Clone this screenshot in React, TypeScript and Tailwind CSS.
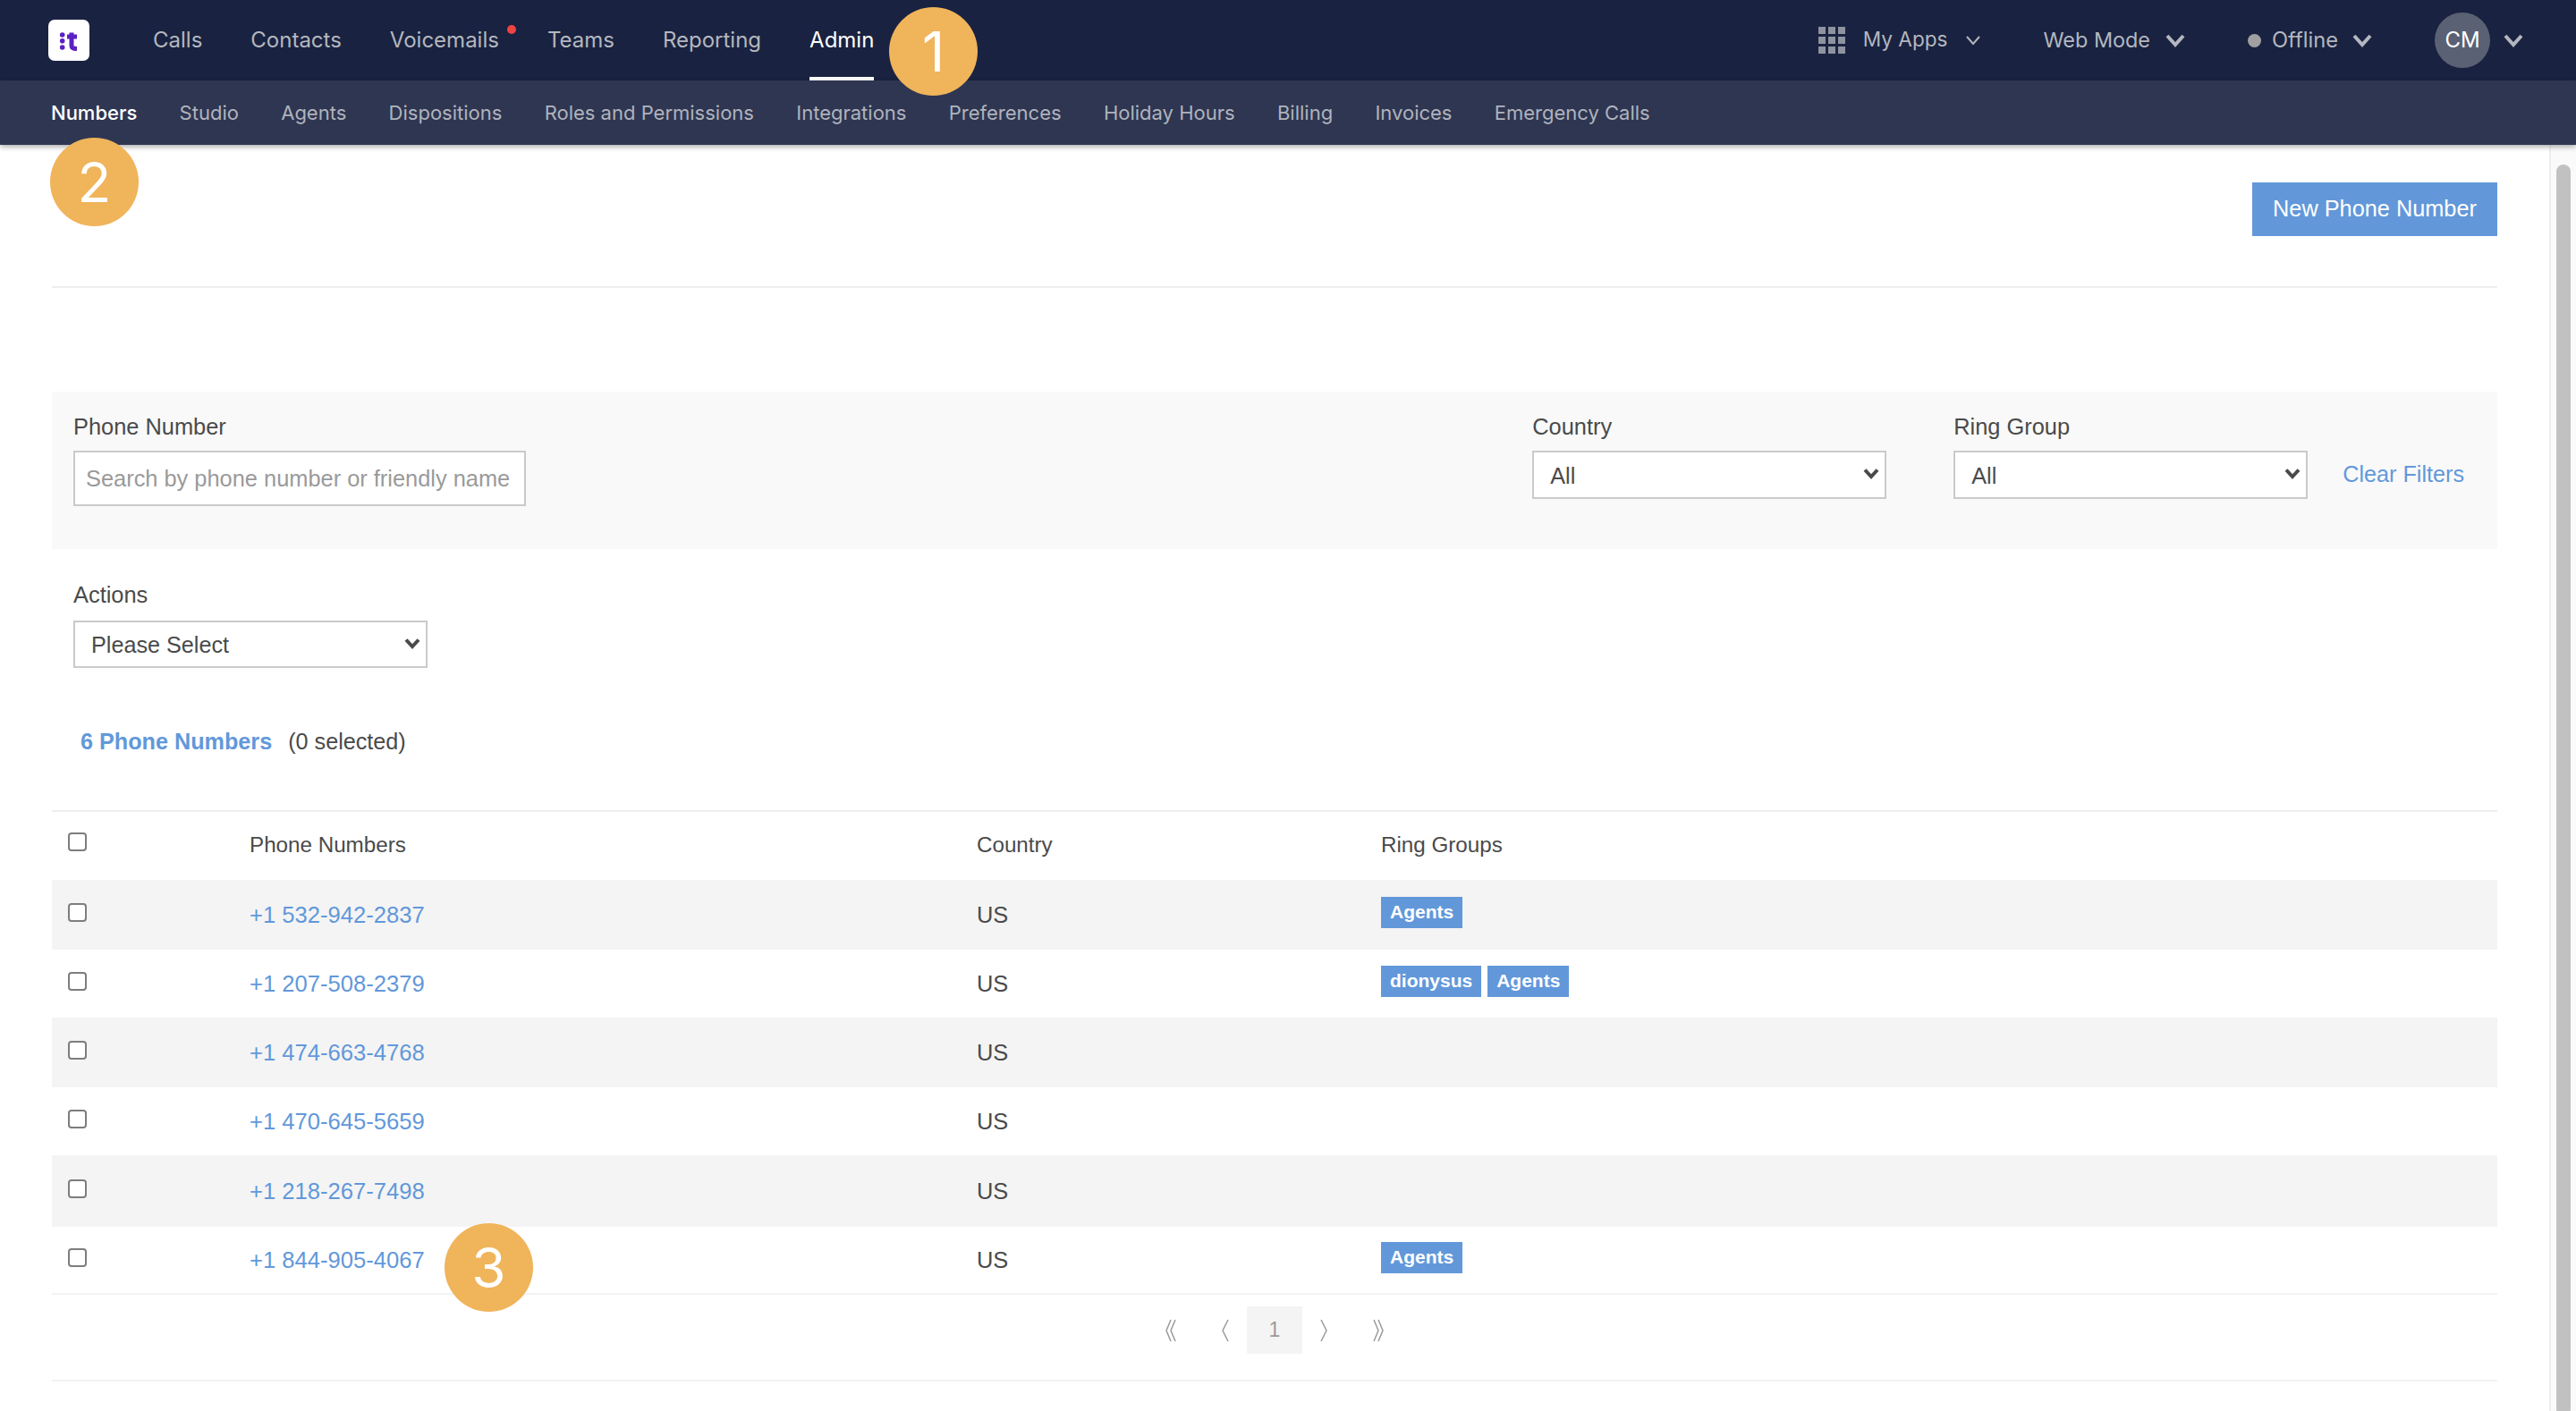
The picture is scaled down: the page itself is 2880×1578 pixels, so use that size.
/**
 * Admin > Numbers page: top nav, filters and phone number table.
 */

const MAIN_NAV = ["Calls", "Contacts", "Voicemails", "Teams", "Reporting", "Admin"];
const SUB_NAV = [
  "Numbers",
  "Studio",
  "Agents",
  "Dispositions",
  "Roles and Permissions",
  "Integrations",
  "Preferences",
  "Holiday Hours",
  "Billing",
  "Invoices",
  "Emergency Calls",
];

const ROWS = [
  { phone: "+1 532-942-2837", groups: ["Agents"], h: "h-[78px]", bg: "bg-[#f4f4f4]" },
  { phone: "+1 207-508-2379", groups: ["dionysus", "Agents"], h: "h-[76px]", bg: "bg-white" },
  { phone: "+1 474-663-4768", groups: [], h: "h-[78px]", bg: "bg-[#f4f4f4]" },
  { phone: "+1 470-645-5659", groups: [], h: "h-[76px]", bg: "bg-white" },
  { phone: "+1 218-267-7498", groups: [], h: "h-[80px]", bg: "bg-[#f4f4f4]" },
  { phone: "+1 844-905-4067", groups: ["Agents"], h: "h-[74px]", bg: "bg-white" },
];

function Marker({ n, className }: { n: number; className: string }) {
  return (
    <div
      className={`absolute z-20 w-[99px] h-[99px] rounded-full bg-[#f0b45b] flex items-center justify-center text-white text-[62px] font-['Inter',sans-serif] ${className}`}
    >
      {n}
    </div>
  );
}

function Logo() {
  return (
    <div className="w-[46px] h-[46px] rounded-[7px] bg-white flex items-center justify-center">
      <svg width="46" height="46" viewBox="0 0 46 46">
        <circle cx="15.7" cy="17" r="2.8" fill="#5b21c4" />
        <circle cx="15.7" cy="23.7" r="2.8" fill="#5b21c4" />
        <circle cx="15.7" cy="31" r="2.8" fill="#5b21c4" />
        <path d="M26 14.5V29c0 2.5 1.5 3.5 6 3.5M21 19h11" fill="none" stroke="#5b21c4" strokeWidth="5" />
      </svg>
    </div>
  );
}

// heavy V used in the top bar, the My Apps one is thinner
function Chevron({ small }: { small?: boolean }) {
  if (small) {
    return (
      <svg width="16" height="11" viewBox="0 0 16 11">
        <path d="M1 1l7 8 7-8" fill="none" stroke="currentColor" strokeWidth="2" />
      </svg>
    );
  }
  return (
    <svg width="22" height="15" viewBox="0 0 22 15">
      <path d="M2 2l9 10 9-10" fill="none" stroke="currentColor" strokeWidth="4" />
    </svg>
  );
}

function SelectBox({ value, className }: { value: string; className: string }) {
  return (
    <div className={`relative ${className}`}>
      <select className="w-full h-full appearance-none bg-white border-2 border-[#cacaca] pl-[18px] pt-[3px] text-[25.2px] text-[#4a4a4a]">
        <option>{value}</option>
      </select>
      <svg
        className="absolute right-[8px] top-[19px] pointer-events-none"
        width="18"
        height="13"
        viewBox="0 0 18 13"
      >
        <path d="M2 2.5l7 7.5 7-7.5" fill="none" stroke="#4a4a4a" strokeWidth="4" />
      </svg>
    </div>
  );
}

function Checkbox() {
  return (
    <input
      type="checkbox"
      className="appearance-none block w-[21px] h-[21px] bg-white border-2 border-[#7d7d7d] rounded-[4px]"
    />
  );
}

function PagerArrow({ d }: { d: string }) {
  return (
    <svg width="14" height="26" viewBox="0 0 14 26">
      <path d={d} fill="none" stroke="#9a9a9a" strokeWidth="1.5" />
    </svg>
  );
}

export default function App() {
  return (
    <div className="relative w-[2880px] h-[1578px] overflow-hidden bg-white font-['Liberation_Sans',sans-serif] text-[25.4px] text-[#4a4a4a]">
      {/* top bar */}
      <div className="h-[90px] bg-[#192240] flex items-center pl-[54px] pr-[59px] font-['Inter',sans-serif] text-[24px] text-[#b4b7bf]">
        <Logo />
        <nav className="flex h-full ml-[71px] gap-[54px]">
          {MAIN_NAV.map((item) => (
            <a
              key={item}
              className={`relative flex items-center h-full ${
                item === "Admin" ? "text-white border-b-4 border-white pt-[4px]" : ""
              }`}
            >
              {item}
              {item === "Voicemails" && (
                <span className="absolute top-[28px] right-[-19px] w-[10px] h-[10px] rounded-full bg-[#ef4444]" />
              )}
            </a>
          ))}
        </nav>
        <div className="flex-1" />
        <svg width="30" height="30" viewBox="0 0 30 30" className="mr-[20px]" fill="#8f93a0">
          {[0, 11, 22].map((y) =>
            [0, 11, 22].map((x) => <rect key={`${x}-${y}`} x={x} y={y} width="8" height="8" />),
          )}
        </svg>
        <span className="text-[22.6px] mb-[2px]">My Apps</span>
        <span className="ml-[21px] mr-[70px]">
          <Chevron small />
        </span>
        <span className="text-[23.4px]">Web Mode</span>
        <span className="ml-[17px] mr-[70px]">
          <Chevron />
        </span>
        <span className="w-[15px] h-[15px] rounded-full bg-[#a0a0a0] mr-[12px]" />
        <span className="text-[23.7px]">Offline</span>
        <span className="ml-[16px] mr-[70px]">
          <Chevron />
        </span>
        <div className="w-[62px] h-[62px] rounded-full bg-[#5a6175] flex items-center justify-center text-white">
          CM
        </div>
        <span className="ml-[15px]">
          <Chevron />
        </span>
      </div>

      {/* sub nav */}
      <div className="relative z-10 h-[72px] pt-[1px] bg-[#2e3652] shadow-[0_2px_6px_rgba(0,0,0,0.35)] flex items-center pl-[57px] gap-[47.3px] font-['Inter',sans-serif] text-[22px] text-[#b0b3bc]">
        {SUB_NAV.map((item) => (
          <a key={item} className={item === "Numbers" ? "text-white font-medium" : ""}>
            {item}
          </a>
        ))}
      </div>

      <div className="flex">
        <main className="w-[2850px] px-[58px] pt-[42px]">
          <div className="flex justify-end pb-[56px] border-b-2 border-[#eeeeee]">
            <button className="h-[60px] w-[274px] bg-[#6298da] text-white text-[25.3px]">New Phone Number</button>
          </div>

          {/* filters */}
          <div className="mt-[116px] h-[176px] bg-[#f9f9f9] flex px-[24px] pt-[26px]">
            <div>
              <label className="block h-[40px] leading-[27px]">Phone Number</label>
              <input
                placeholder="Search by phone number or friendly name"
                className="w-[506px] h-[62px] bg-white border-2 border-[#cacaca] px-[12px] text-[25.4px] placeholder:text-[#9a9a9a]"
              />
            </div>
            <div className="flex-1" />
            <div className="w-[396px]">
              <label className="block h-[40px] leading-[27px]">Country</label>
              <SelectBox value="All" className="h-[54px]" />
            </div>
            <div className="w-[396px] ml-[75px]">
              <label className="block h-[40px] leading-[27px]">Ring Group</label>
              <SelectBox value="All" className="h-[54px]" />
            </div>
            <a className="ml-[39px] mr-[13px] mt-[52px] text-[#6298da] text-[25.2px] leading-[28px]">Clear Filters</a>
          </div>

          <div className="pl-[24px] pt-[38px]">
            <label className="block h-[42px] leading-[27px]">Actions</label>
            <SelectBox value="Please Select" className="w-[396px] h-[53px]" />
          </div>

          <div className="pl-[32px] pt-[68px] h-[159px] leading-[28px] text-[25.2px]">
            <span className="font-bold text-[#6298da]">6 Phone Numbers</span>
            <span className="ml-[18px]">(0 selected)</span>
          </div>

          {/* table */}
          <div className="border-t-2 border-[#eeeeee]">
            <div className="flex items-center h-[76px] text-[24.2px]">
              <div className="w-[221px] pl-[18px] mb-[9px]">
                <Checkbox />
              </div>
              <div className="w-[813px] mb-[1px]">Phone Numbers</div>
              <div className="w-[452px] mb-[1px]">Country</div>
              <div className="mb-[1px]">Ring Groups</div>
            </div>
            {ROWS.map((row) => (
              <div key={row.phone} className={`flex items-center ${row.h} ${row.bg}`}>
                <div className="w-[221px] pl-[18px] mb-[6px]">
                  <Checkbox />
                </div>
                <a className="w-[813px] mt-[1px] text-[#6298da] text-[25.6px]">{row.phone}</a>
                <div className="w-[452px] mt-[1px]">US</div>
                <div className="flex gap-[7px] mb-[6px]">
                  {row.groups.map((g) => (
                    <span key={g} className="h-[35px] flex items-center px-[10px] bg-[#6298da] text-white font-bold text-[21px]">
                      {g}
                    </span>
                  ))}
                </div>
              </div>
            ))}
          </div>

          {/* pager */}
          <div className="border-t-2 border-b-2 border-[#f2f2f2] h-[99px] pt-[13px] flex justify-center">
            <div className="flex items-center h-[53px] gap-[47px] text-[#9a9a9a]">
              <PagerArrow d="M7 1L2 13l5 12M12 1L7 13l5 12" />
              <div className="flex items-center">
                <PagerArrow d="M10 1L4 13l6 12" />
                <div className="w-[62px] h-[53px] mx-[17px] bg-[#f4f4f4] flex items-center justify-center text-[23px]">1</div>
                <PagerArrow d="M4 1l6 12-6 12" />
              </div>
              <PagerArrow d="M2 1l5 12-5 12M7 1l5 12-5 12" />
            </div>
          </div>
        </main>

        {/* scrollbar */}
        <div className="w-[30px] h-[1416px] border-l-2 border-[#eeeeee] bg-[#fafafa] pl-[6px] pt-[22px]">
          <div className="w-[16px] h-[1400px] rounded-full bg-[#c1c1c1]" />
        </div>
      </div>

      <Marker n={1} className="left-[994px] top-[8px]" />
      <Marker n={2} className="left-[56px] top-[154px]" />
      <Marker n={3} className="left-[497px] top-[1368px]" />
    </div>
  );
}
